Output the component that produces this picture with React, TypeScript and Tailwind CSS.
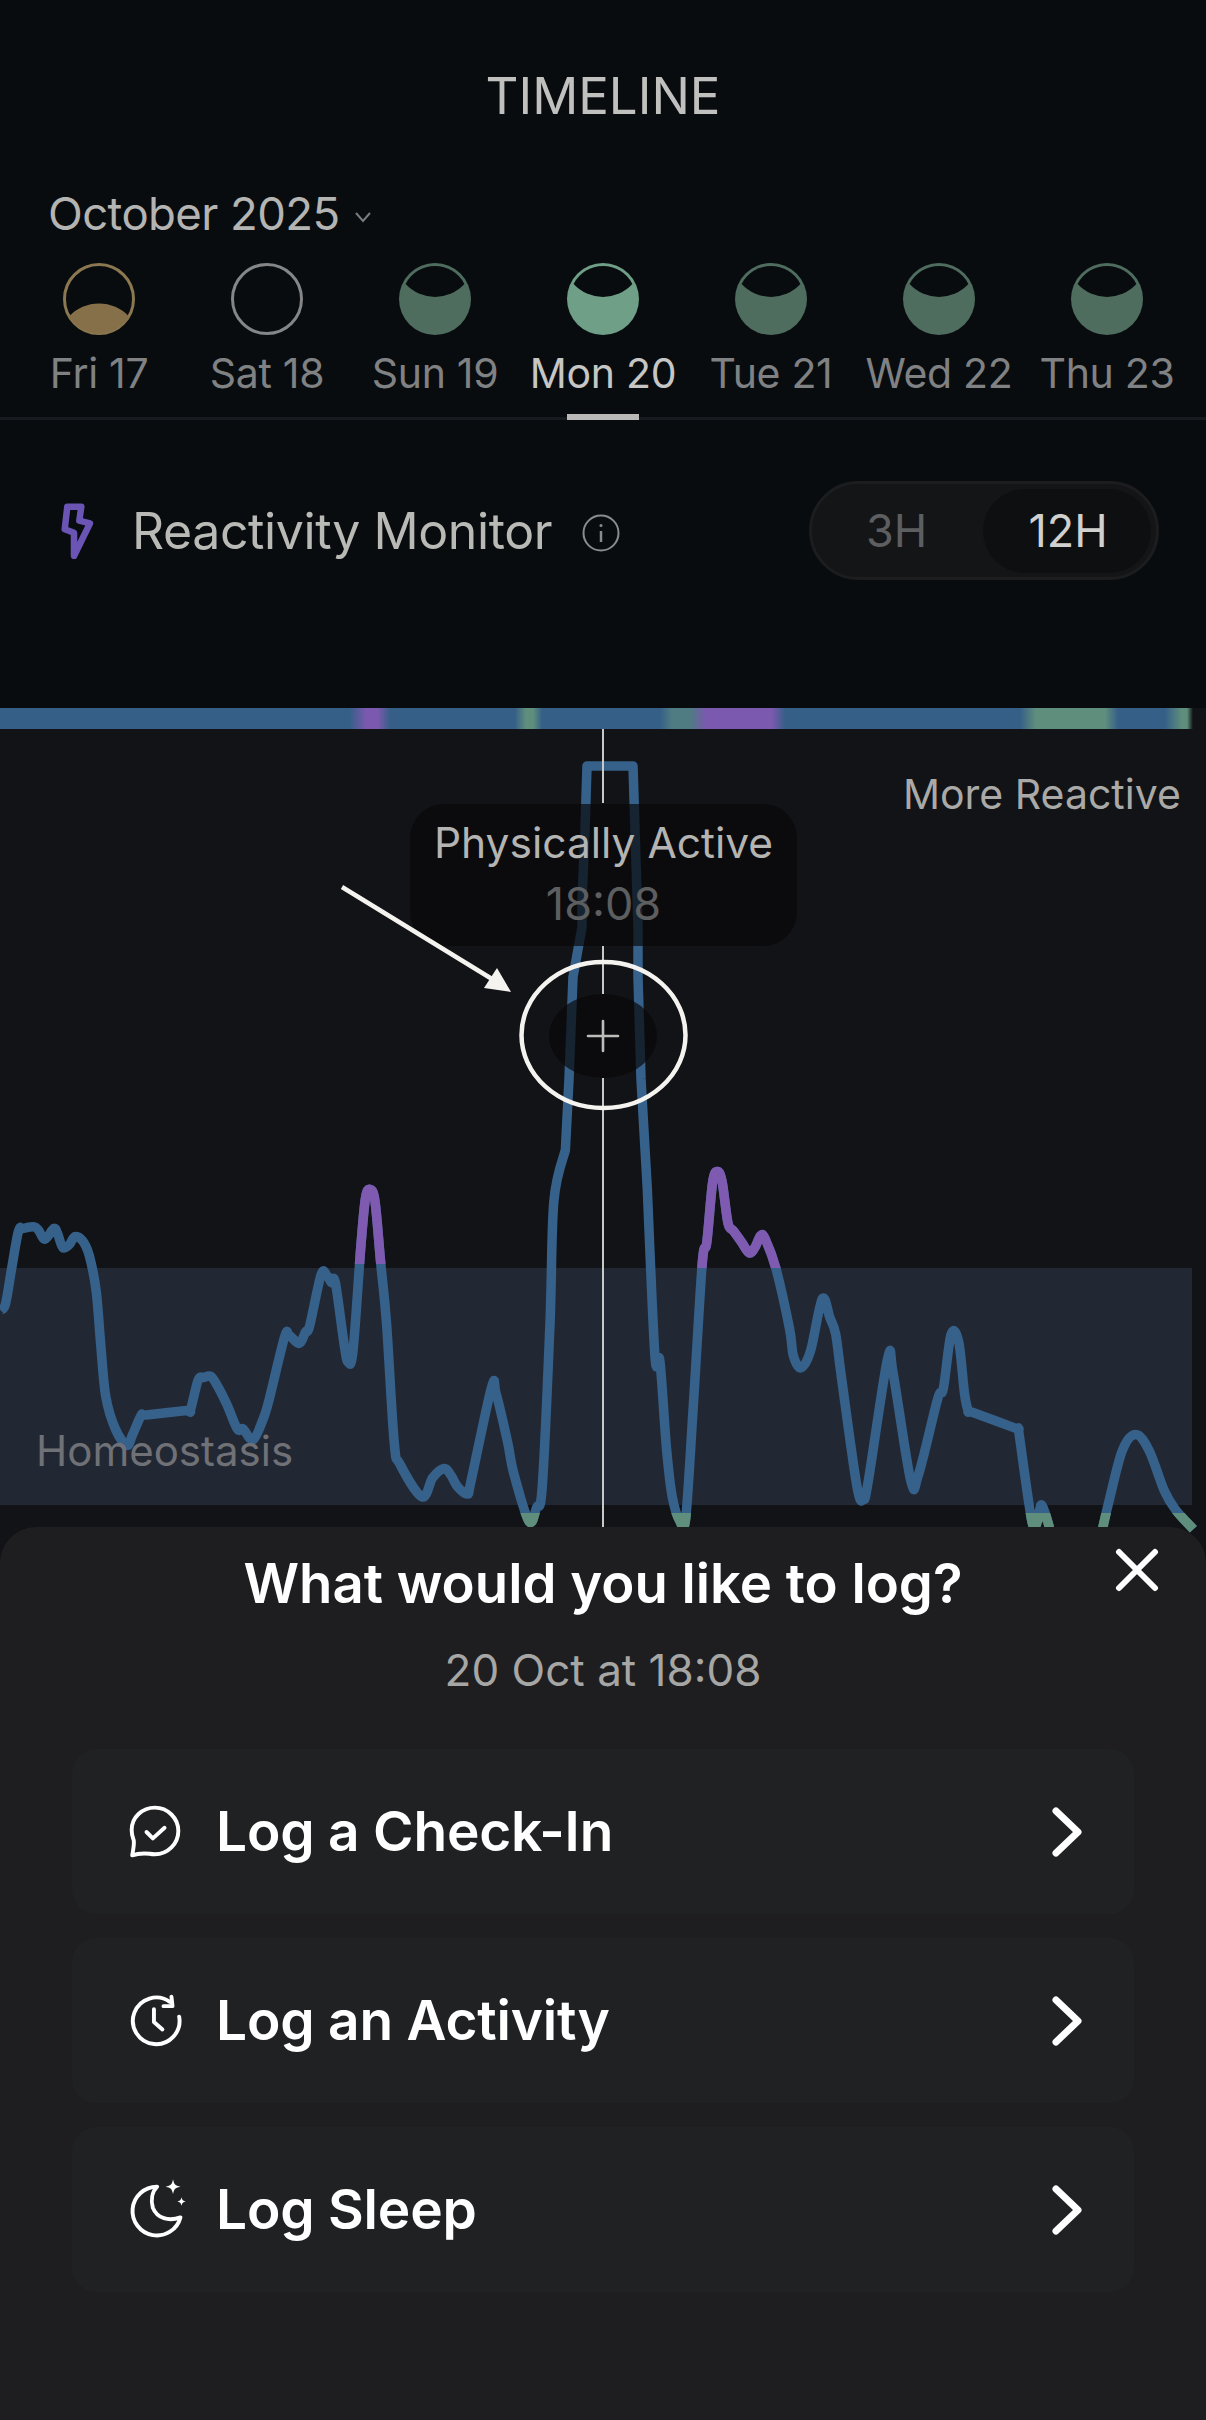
import React from "react";

type Pt = [number, number];

// chart traced from the reference, page coordinates
const zl = (x: number, y: number): Pt => [x / 2.6, 700 + y / 1.845];
const zr = (x: number, y: number): Pt => [603 + x / 2.6, 700 + y / 1.845];

const leftPts: Pt[] = ([
  [0, 1125], [14, 1115], [30, 1050], [48, 980], [60, 975], [88, 972], [100, 978], [117, 995], [140, 975], [150, 985],
  [163, 1010], [180, 1005], [195, 990], [215, 998], [232, 1025], [250, 1090], [262, 1190], [275, 1285], [300, 1345],
  [330, 1375], [345, 1355], [367, 1320], [380, 1319], [485, 1311], [495, 1310], [515, 1255], [530, 1250], [548, 1248], [565, 1265], [590, 1300],
  [617, 1345], [632, 1345], [658, 1365], [685, 1325], [700, 1290], [740, 1175], [752, 1172], [778, 1187], [795, 1165],
  [805, 1155], [835, 1060], [850, 1062], [862, 1075], [872, 1075], [895, 1190], [905, 1222], [918, 1200], [938, 1010],
  [950, 920], [962, 903], [975, 925], [990, 1040], [1005, 1150], [1025, 1370], [1040, 1410], [1097, 1470], [1125, 1435],
  [1155, 1418], [1172, 1430], [1190, 1452], [1215, 1465], [1225, 1440], [1278, 1268], [1290, 1280], [1320, 1370],
  [1335, 1425], [1375, 1515], [1395, 1490], [1410, 1450], [1430, 1150], [1440, 925], [1470, 830],
] as Pt[]).map(([x, y]) => zl(x, y));

const spikePts: Pt[] = [
  [569, 1079], [573, 977], [582, 927], [582, 900], [585, 830], [587, 766], [633, 766], [635, 830], [638, 927], [638, 977], [641, 1079],
];

const rightPts: Pt[] = ([
  [115, 900], [135, 1210], [148, 1220], [165, 1380], [180, 1470], [200, 1515], [215, 1510], [235, 1300], [258, 1040],
  [270, 1000], [285, 890], [298, 870], [310, 890], [325, 965], [340, 980], [360, 1000], [380, 1020], [395, 1010],
  [410, 988], [422, 995], [450, 1050], [485, 1160], [495, 1210], [515, 1232], [540, 1200], [570, 1105], [590, 1140],
  [605, 1170], [620, 1250], [660, 1450], [677, 1475], [690, 1440], [740, 1215], [755, 1245], [800, 1440], [820, 1430],
  [870, 1290], [885, 1270], [905, 1170], [925, 1185], [940, 1280], [950, 1312], [960, 1314], [1070, 1343], [1080, 1345], [1083, 1360], [1115, 1515], [1130, 1515],
  [1140, 1485], [1160, 1525], [1175, 1570], [1285, 1570], [1300, 1525], [1315, 1480], [1350, 1385], [1385, 1355], [1420, 1385],
  [1460, 1460], [1490, 1495], [1535, 1530],
] as Pt[]).map(([x, y]) => zr(x, y));

function smooth(pts: Pt[]) {
  let d = `M${pts[0][0]} ${pts[0][1]}`;
  for (let i = 0; i < pts.length - 1; i++) {
    const p0 = pts[Math.max(i - 1, 0)];
    const p1 = pts[i];
    const p2 = pts[i + 1];
    const p3 = pts[Math.min(i + 2, pts.length - 1)];
    const c1x = p1[0] + (p2[0] - p0[0]) / 6;
    const c1y = p1[1] + (p2[1] - p0[1]) / 6;
    const c2x = p2[0] - (p3[0] - p1[0]) / 6;
    const c2y = p2[1] - (p3[1] - p1[1]) / 6;
    d += `C${c1x} ${c1y} ${c2x} ${c2y} ${p2[0]} ${p2[1]}`;
  }
  return d;
}

const line =
  smooth(leftPts) +
  "L" + spikePts.map((p) => p.join(" ")).join("L") +
  "L" + smooth(rightPts).slice(1);

const days = [
  { label: "Fri 17", kind: "gold" },
  { label: "Sat 18", kind: "empty" },
  { label: "Sun 19", kind: "moon" },
  { label: "Mon 20", kind: "active" },
  { label: "Tue 21", kind: "moon" },
  { label: "Wed 22", kind: "moon" },
  { label: "Thu 23", kind: "moon" },
];

function DayIcon({ kind }: { kind: string }) {
  if (kind === "gold") {
    return (
      <svg width="72" height="72" viewBox="0 0 72 72">
        <circle cx="36" cy="36" r="34.5" fill="none" stroke="#8c7850" strokeWidth="3" />
        <path d="M6 53.5A41 41 0 0 1 66 53.5A35 35 0 0 1 6 53.5Z" fill="#86704a" />
      </svg>
    );
  }
  if (kind === "empty") {
    return (
      <svg width="72" height="72" viewBox="0 0 72 72">
        <circle cx="36" cy="36" r="34.5" fill="none" stroke="#858687" strokeWidth="3" />
      </svg>
    );
  }
  const fill = kind === "active" ? "#6f9f87" : "#4f6d5f";
  return (
    <svg width="72" height="72" viewBox="0 0 72 72">
      <circle cx="36" cy="36" r="36" fill={fill} />
      <path d="M6.6 21A33 33 0 0 1 65.4 21A40 40 0 0 1 6.6 21Z" fill="#090c0f" />
    </svg>
  );
}

function CheckInIcon() {
  return (
    <svg width="70" height="70" viewBox="2 2 66 66" fill="none" stroke="#fff" strokeWidth="3.700" strokeLinecap="round" strokeLinejoin="round">
      <path d="M35 12C23 12 13 21 13 33C13 38 14 40 15 43C15.5 47 14.5 52 13.5 57C19 55 25 55 30 55.5C32 56 33.5 56 35 56C47 56 57 46 57 34C57 22 47 12 35 12Z" />
      <path d="M27 35L33 41L44 31" />
    </svg>
  );
}

function ActivityIcon() {
  return (
    <svg width="70" height="70" viewBox="2 2 66 66" fill="none" stroke="#fff" strokeWidth="3.700" strokeLinecap="round" strokeLinejoin="round">
      <path d="M49 17A22 22 0 1 0 57.8 31" />
      <path d="M50.5 12L51.5 21L43 21" />
      <path d="M34 24V36L42 43" />
    </svg>
  );
}

function SleepIcon() {
  return (
    <svg width="70" height="70" viewBox="2 2 66 66" fill="none" stroke="#fff" strokeWidth="3.700" strokeLinecap="round" strokeLinejoin="round">
      <path d="M37 13A23 23 0 1 0 59 42C48 46 37 43 33 33C31 26 32 18 37 13Z" />
      <path d="M52 6C53 11 54 12 59 13C54 14 53 15 52 20C51 15 50 14 45 13C50 12 51 11 52 6Z" fill="#fff" stroke="none" />
      <path d="M60 23C60.5 25.500 61.500 26.500 64 27C61.500 27.500 60.500 28.500 60 31C59.500 28.500 58.500 27.500 56 27C58.500 26.500 59.500 25.500 60 23Z" fill="#fff" stroke="none" />
    </svg>
  );
}

function Row({ icon, label }: { icon: React.ReactNode; label: string }) {
  return (
    <div className="flex h-[165px] items-center rounded-[24px] bg-[#202123] pl-[48px] pr-[44px]">
      {icon}
      <span className="-mt-[2px] ml-[26px] flex-1 text-[55px] leading-[64px] font-semibold tracking-[-0.2px] text-white">{label}</span>
      <svg width="44" height="60" viewBox="0 0 44 60" fill="none" stroke="#fff" strokeWidth="7" strokeLinecap="round" strokeLinejoin="round">
        <path d="M10 9L32 30L10 51" />
      </svg>
    </div>
  );
}

export default function App() {
  return (
    <div className="flex h-[2420px] w-[1206px] flex-col overflow-hidden bg-[#090c0f] font-[Inter,sans-serif]">
      <header className="h-[420px] border-b-[3px] border-[#171b1f] pt-[66px]">
        <h1 className="text-center text-[51px] leading-[60px] font-normal text-[#c0c0be]">TIMELINE</h1>
        <div className="mt-[61px] flex items-center pl-[48px] text-[#b4b4b2]">
          <span className="text-[45.5px] leading-[53px] tracking-[-0.6px]">October 2025</span>
          <svg className="ml-[14px] mt-[6px]" width="20" height="14" viewBox="0 0 20 14" fill="none" stroke="#7a7b7c" strokeWidth="2">
            <path d="M3 3L10 11L17 3" />
          </svg>
        </div>
        <div className="mt-[23px] grid grid-cols-7 px-[15px]">
          {days.map((d) => (
            <div key={d.label} className="flex flex-col items-center">
              <DayIcon kind={d.kind} />
              <span className={`mt-[13px] text-[41px] leading-[50px] tracking-[-0.3px] ${d.kind === "active" ? "text-[#c6c6c4]" : "text-[#7f8183]"}`}>
                {d.label}
              </span>
              {d.kind === "active" && <div className="mt-[16px] h-[6px] w-[72px] bg-[#b9b9b7]" />}
            </div>
          ))}
        </div>
      </header>

      <section className="flex h-[288px] items-start pl-[60px] pr-[47px] pt-[61px]">
        <div className="flex h-[99px] flex-1 items-center">
          <svg width="35" height="57" viewBox="20 12 35 57" fill="none" stroke="#6a55b5" strokeWidth="6.500" strokeLinejoin="round">
            <path d="M27.300 16.700H41.300L39.300 30.700L50 33.300L34 66V42.700L24.700 39.300Z" />
          </svg>
          <span className="ml-[37px] text-[50px] leading-[60px] tracking-[-0.4px] text-[#b9b9b6]">Reactivity Monitor</span>
          <svg className="ml-[30px] mt-[4px]" width="38" height="38" viewBox="0 0 38 38" fill="none" stroke="#8a8b8c" strokeWidth="2">
            <circle cx="19" cy="19" r="17.500" />
            <path d="M19 17V28" strokeWidth="2.500" />
            <circle cx="19" cy="11.500" r="1.500" fill="#8a8b8c" stroke="none" />
          </svg>
        </div>
        <div className="flex h-[99px] w-[350px] items-center justify-between rounded-full border-[3px] border-[#1c1d1f] bg-[#141517] pl-[54px] pr-[5px]">
          <span className="text-[45px] text-[#5d5e60]">3H</span>
          <span className="flex h-[84px] w-[168px] items-center justify-center rounded-full bg-[#0e0f11] pl-[2px] text-[45px] text-[#d0d0ce]">12H</span>
        </div>
      </section>

      <div className="h-[21px] bg-[linear-gradient(90deg,#365f88_350px,#7a59ae_366px,#7a59ae_378px,#365f88_390px,#365f88_515px,#5f8f7c_526px,#5f8f7c_533px,#365f88_542px,#365f88_660px,#4f7c82_672px,#4f7c82_690px,#7a59ae_706px,#7a59ae_772px,#365f88_785px,#365f88_1020px,#5f8f7c_1036px,#5f8f7c_1105px,#365f88_1118px,#365f88_1165px,#5f8f7c_1182px,#5f8f7c_1187px,#121316_1193px)]" />

      <div className="relative h-[834px] shrink-0 bg-[#121316]">
        <svg className="block" width="1206" height="834" viewBox="0 729 1206 834">
          <defs>
            <clipPath id="purpleClip">
              <rect x="350" y="1100" width="40" height="164" />
              <rect x="690" y="1100" width="100" height="168" />
            </clipPath>
            <clipPath id="greenClip">
              <rect x="0" y="1513" width="1206" height="60" />
            </clipPath>
          </defs>
          <rect x="0" y="1268" width="1192" height="237" fill="#222833" />
          <path d={line} fill="none" stroke="#36618b" strokeWidth="9.500" strokeLinejoin="round" />
          <path d={line} fill="none" stroke="#7e5bb0" strokeWidth="9.500" strokeLinejoin="round" clipPath="url(#purpleClip)" />
          <path d={line} fill="none" stroke="#5f8f7c" strokeWidth="9.500" strokeLinejoin="round" clipPath="url(#greenClip)" />
          <path d="M603 729V803M603 946V994M603 1078V1530" stroke="#c9c9c7" strokeWidth="2" />
        </svg>

        <span className="absolute left-[903px] top-[41px] text-[41px] leading-[48px] text-[#a9a9a7]">More Reactive</span>
        <span className="absolute left-[36px] top-[698px] text-[42px] leading-[48px] text-[#6f7176]">Homeostasis</span>

        {/* tooltip over the line */}
        <div className="absolute left-[410px] top-[75px] flex h-[142px] w-[387px] flex-col items-center justify-center rounded-[34px] bg-[#08090c]/70">
          <span className="-mt-[5px] text-[42.500px] leading-[59px] text-[#b4b4b2]">Physically Active</span>
          <span className="mt-[2px] text-[45px] leading-[59px] text-[#5c5e60]">18:08</span>
        </div>

        <div className="absolute left-[549px] top-[265px] flex h-[84px] w-[108px] items-center justify-center rounded-[50%] bg-[#08090c]/70">
          <svg width="34" height="34" viewBox="0 0 34 34" stroke="#bdbdbb" strokeWidth="2.600" strokeLinecap="round">
            <path d="M17 2V32M2 17H32" />
          </svg>
        </div>

        {/* annotation drawn on the screenshot */}
        <svg className="absolute left-0 top-0" width="1206" height="834" viewBox="0 729 1206 834" fill="none">
          <ellipse cx="603.500" cy="1035" rx="82" ry="73" stroke="#f5f3ef" strokeWidth="4.500" />
          <path d="M342 887L492 979" stroke="#f5f3ef" strokeWidth="4.500" />
          <path d="M511 992L497 968L484 988Z" fill="#f5f3ef" />
        </svg>
      </div>

      <div className="relative z-10 -mt-[36px] flex h-[893px] shrink-0 flex-col rounded-t-[36px] bg-[#1e1e20] pt-[24px]">
        <h2 className="text-center text-[54.500px] leading-[64px] font-semibold text-white">What would you like to log?</h2>
        <p className="mt-[30px] text-center text-[44px] leading-[50px] text-[#a6a6a5]">20 Oct at 18:08</p>
        <svg className="absolute right-[47px] top-[21px]" width="44" height="44" viewBox="0 0 44 44" stroke="#fff" strokeWidth="6" strokeLinecap="round">
          <path d="M4 4L40 40M40 4L4 40" />
        </svg>
        <div className="mx-[72px] mt-[54px] flex flex-col gap-[24px]">
          <Row icon={<CheckInIcon />} label="Log a Check-In" />
          <Row icon={<ActivityIcon />} label="Log an Activity" />
          <Row icon={<SleepIcon />} label="Log Sleep" />
        </div>
      </div>
    </div>
  );
}
